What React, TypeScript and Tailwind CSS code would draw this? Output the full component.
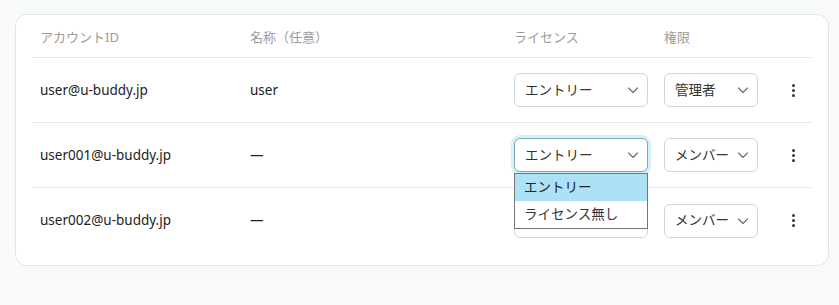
import React from 'react'

type Row = { id: string; name: string; license: string; role: string; open?: boolean }

const rows: Row[] = [
  { id: 'user@u-buddy.jp', name: 'user', license: 'エントリー', role: '管理者' },
  { id: 'user001@u-buddy.jp', name: '—', license: 'エントリー', role: 'メンバー', open: true },
  { id: 'user002@u-buddy.jp', name: '—', license: 'エントリー', role: 'メンバー' },
]

function Chevron() {
  return (
    <svg width="12" height="12" viewBox="0 0 12 12" fill="none" className="shrink-0">
      <path d="M1.5 4 L6 8.5 L10.5 4" stroke="#6b7478" strokeWidth="1.2" strokeLinecap="round" strokeLinejoin="round" />
    </svg>
  )
}

function Select({ value, width, focused }: { value: string; width: string; focused?: boolean }) {
  return (
    <div
      className={`${width} h-[34px] flex items-center justify-between pl-[10px] pr-[8px] rounded-[6px] bg-white border ${
        focused ? 'border-[#7fa7ad] ring-[3px] ring-[#d4f1f8]' : 'border-[#cfd6d9]'
      }`}
    >
      <span className="text-[13.5px] text-[#333] whitespace-nowrap overflow-hidden">{value}</span>
      <Chevron />
    </div>
  )
}

function Kebab() {
  return (
    <div className="flex flex-col items-center gap-[2px]">
      <span className="w-[3px] h-[3px] rounded-full bg-[#2b393e]" />
      <span className="w-[3px] h-[3px] rounded-full bg-[#2b393e]" />
      <span className="w-[3px] h-[3px] rounded-full bg-[#2b393e]" />
    </div>
  )
}

export default function App() {
  return (
    <div
      className="w-[839px] h-[305px] bg-[#f8f9f9] pt-[14px] pl-[15px]"
      style={{ fontFamily: '"Noto Sans", "Noto Sans CJK JP", sans-serif' }}
    >
      <div className="w-[814px] h-[252px] bg-white border border-[#dce5e8] rounded-[12px] px-[16px] pt-[4px]">
        {/* Header */}
        <div className="flex items-center h-[39px] border-b border-[#e6eaec] text-[13px] text-[#9b9b9b]">
          <div className="w-[210px] pl-[8px]">アカウントID</div>
          <div className="w-[264px] pl-[8px]">名称（任意）</div>
          <div className="w-[150px] pl-[8px]">ライセンス</div>
          <div className="w-[114px] pl-[8px]">権限</div>
          <div className="flex-1" />
        </div>

        {/* Rows */}
        {rows.map((r, i) => (
          <div
            key={r.id}
            className={`flex items-center h-[65px] text-[13.5px] text-[#222] ${i < rows.length - 1 ? 'border-b border-[#e6eaec]' : ''}`}
          >
            <div className="w-[210px] pl-[8px]">{r.id}</div>
            <div className="w-[264px] pl-[8px]">{r.name}</div>
            <div className="w-[150px] pl-[8px] relative">
              <Select value={r.license} width="w-[134px]" focused={r.open} />
              {r.open && (
                <div className="absolute left-[8px] top-[35px] w-[134px] bg-white border border-[#767676] z-10">
                  <div className="h-[27px] flex items-center pl-[9px] bg-[#ade1f5] text-[13.5px] text-[#222]">エントリー</div>
                  <div className="h-[27px] flex items-center pl-[9px] text-[13.5px] text-[#333]">ライセンス無し</div>
                </div>
              )}
            </div>
            <div className="w-[114px] pl-[8px]">
              <Select value={r.role} width="w-[94px]" />
            </div>
            <div className="flex-1 flex justify-center pl-[4px]">
              <Kebab />
            </div>
          </div>
        ))}
      </div>
    </div>
  )
}
